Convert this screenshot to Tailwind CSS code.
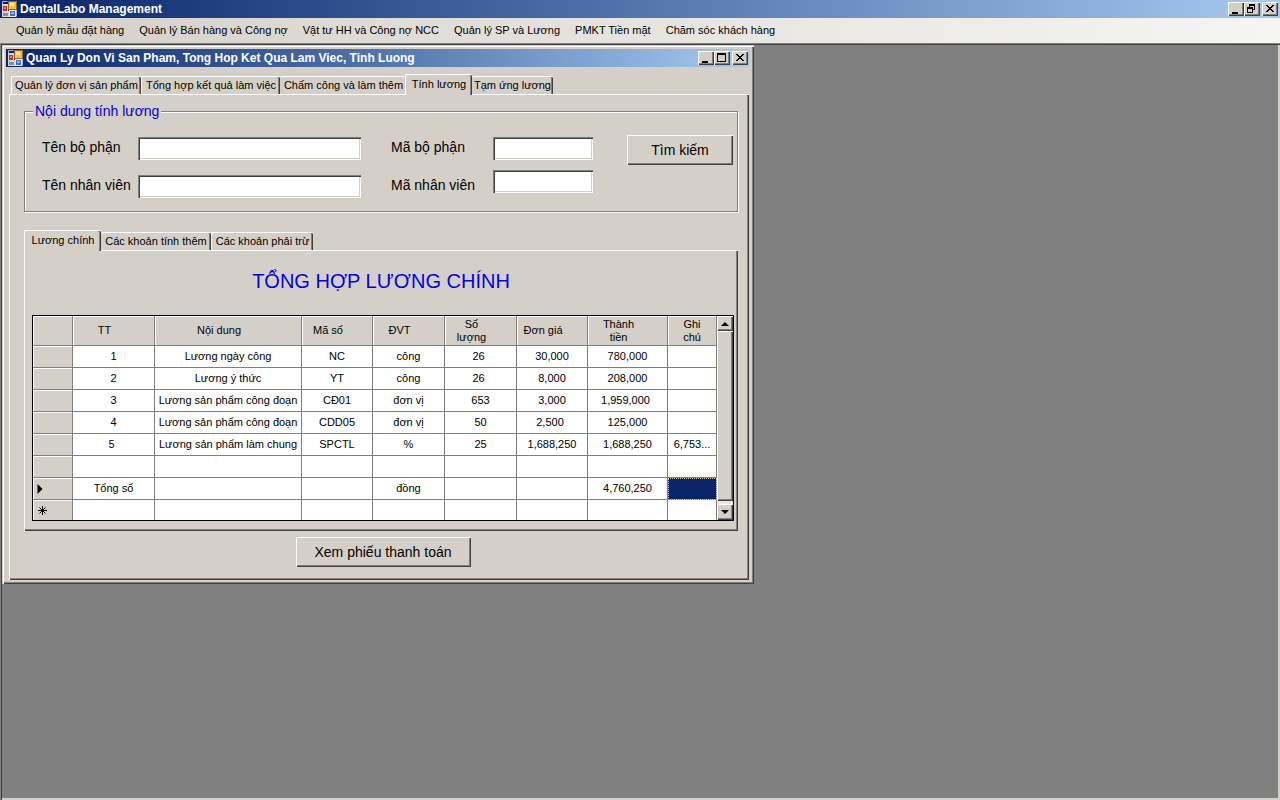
<!DOCTYPE html>
<html lang="vi">
<head>
<meta charset="utf-8">
<title>DentalLabo Management</title>
<script src="https://cdn.jsdelivr.net/npm/@tailwindcss/browser@4"></script>
</head>
<body class="flex min-h-screen flex-col bg-[#d4d0c8] font-['Liberation_Sans',Arial,sans-serif] text-[11px] leading-[13px] text-black">

<svg class="hidden">
  <symbol id="app" viewBox="0 0 16 16">
    <rect x="0" y="3" width="6" height="9" fill="#d9d4cc"/>
    <rect x="1" y="5" width="4" height="5" fill="#c8321e"/><rect x="2" y="6" width="2" height="2" fill="#f08070"/>
    <rect x="6" y="0" width="9" height="9" fill="#8a6a30"/>
    <rect x="7" y="1" width="7" height="7" fill="#f4c23c"/><rect x="8" y="2" width="4" height="3" fill="#ffe78c"/>
    <rect x="0" y="10" width="7" height="6" fill="#d9d4cc"/><rect x="1" y="12" width="5" height="3" fill="#7d8fb8"/>
    <rect x="7" y="9" width="7" height="7" fill="#e8ecf6"/>
    <rect x="8" y="10" width="5" height="5" fill="#3f6fd0"/><rect x="9" y="11" width="3" height="2" fill="#8db4f4"/>
    <path d="M0.500 3V0.500H5.500M14.500 9V15.500" fill="none" stroke="#a9b6d4"/>
  </symbol>
  <symbol id="min" viewBox="0 0 16 14"><path d="M4 10h6v2H4z"/></symbol>
  <symbol id="max" viewBox="0 0 16 14"><path d="M3 2h9v9H3zM4 4v6h7V4z" fill-rule="evenodd"/></symbol>
  <symbol id="restore" viewBox="0 0 16 14"><path d="M5 2h6v6H9V7h1V4H6v1H5zM3 5h6v6H3zM4 7v3h4V7z" fill-rule="evenodd"/></symbol>
  <symbol id="close" viewBox="0 0 16 14"><path d="M4 3h2v1h1v1h2V4h1V3h2v1h-1v1h-1v1H9v1h1v1h1v1h1v1h-2V9H9V8H7v1H6v1H4V9h1V8h1V7h1V6H6V5H5V4H4z"/></symbol>
</svg>

<header class="flex h-[18px] items-center bg-linear-to-r from-[#0a246a] to-[#a6caf0] px-[2px]">
  <svg class="size-4 shrink-0"><use href="#app"/></svg>
  <h1 class="ml-[2px] flex-1 text-[12px] font-bold text-white">DentalLabo Management</h1>
  <button aria-label="Thu nhỏ" class="h-[14px] w-4 bg-[#d4d0c8] shadow-[inset_1px_1px_#fff,inset_-1px_-1px_#404040,inset_-2px_-2px_#808080]"><svg class="h-[14px] w-4"><use href="#min"/></svg></button>
  <button aria-label="Khôi phục" class="h-[14px] w-4 bg-[#d4d0c8] shadow-[inset_1px_1px_#fff,inset_-1px_-1px_#404040,inset_-2px_-2px_#808080]"><svg class="h-[14px] w-4"><use href="#restore"/></svg></button>
  <button aria-label="Đóng" class="ml-[2px] h-[14px] w-4 bg-[#d4d0c8] shadow-[inset_1px_1px_#fff,inset_-1px_-1px_#404040,inset_-2px_-2px_#808080]"><svg class="h-[14px] w-4"><use href="#close"/></svg></button>
</header>

<nav class="flex h-[25px] items-center gap-[15px] bg-linear-to-r from-[#d4d0c8] via-[#e6e4df] to-[#f5f5f3] px-4">
  <button>Quản lý mẫu đặt hàng</button>
  <button>Quản lý Bán hàng và Công nợ</button>
  <button>Vật tư HH và Công nợ NCC</button>
  <button>Quản lý SP và Lương</button>
  <button>PMKT Tiền mặt</button>
  <button>Chăm sóc khách hàng</button>
</nav>

<main class="relative flex-1 bg-[#808080] shadow-[inset_1px_1px_#808080,inset_2px_2px_#404040,inset_-2px_-2px_#d4d0c8]">
  <section aria-label="Tính lương" class="absolute top-[2px] left-[2px] w-[752px] bg-[#d4d0c8] px-1 pt-1 pb-1 shadow-[inset_1px_1px_#d4d0c8,inset_2px_2px_#fff,inset_-1px_-1px_#404040,inset_-2px_-2px_#808080]">
    <div class="flex h-[18px] items-center bg-linear-to-r from-[#0a246a] to-[#a6caf0] px-[2px]">
      <svg class="size-4 shrink-0"><use href="#app"/></svg>
      <h2 class="ml-[2px] flex-1 text-[12px] font-bold text-white">Quan Ly Don Vi San Pham, Tong Hop Ket Qua Lam Viec, Tinh Luong</h2>
      <button aria-label="Thu nhỏ" class="h-[14px] w-4 bg-[#d4d0c8] shadow-[inset_1px_1px_#fff,inset_-1px_-1px_#404040,inset_-2px_-2px_#808080]"><svg class="h-[14px] w-4"><use href="#min"/></svg></button>
      <button aria-label="Phóng to" class="h-[14px] w-4 bg-[#d4d0c8] shadow-[inset_1px_1px_#fff,inset_-1px_-1px_#404040,inset_-2px_-2px_#808080]"><svg class="h-[14px] w-4"><use href="#max"/></svg></button>
      <button aria-label="Đóng" class="ml-[2px] h-[14px] w-4 bg-[#d4d0c8] shadow-[inset_1px_1px_#fff,inset_-1px_-1px_#404040,inset_-2px_-2px_#808080]"><svg class="h-[14px] w-4"><use href="#close"/></svg></button>
    </div>

    <div class="mt-[7px] pr-px pl-[3px]">
      <div role="tablist" class="flex items-end pl-[2px] whitespace-nowrap">
        <button role="tab" class="h-[18px] w-[130px] rounded-t-[2px] border-t border-l border-white shadow-[inset_-1px_0_#404040,inset_-2px_0_#808080]">Quản lý đơn vị sản phẩm</button>
        <button role="tab" class="h-[18px] w-[139px] rounded-t-[2px] border-t border-l border-white shadow-[inset_-1px_0_#404040,inset_-2px_0_#808080]">Tổng hợp kết quả làm việc</button>
        <button role="tab" class="h-[18px] w-[125px] rounded-t-[2px] border-t border-white pl-[2px]">Chấm công và làm thêm</button>
        <button role="tab" aria-selected="true" class="z-10 -mb-px h-[21px] w-[67px] rounded-t-[2px] border-t border-l border-white bg-[#d4d0c8] pb-[2px] shadow-[inset_-1px_0_#404040,inset_-2px_0_#808080]">Tính lương</button>
        <button role="tab" class="h-[18px] w-[81px] rounded-t-[2px] border-t border-white shadow-[inset_-1px_0_#404040,inset_-2px_0_#808080]">Tạm ứng lương</button>
      </div>

      <div role="tabpanel" class="pt-[10px] pr-[11px] pb-[13px] pl-[15px] shadow-[inset_1px_1px_#fff,inset_-1px_-1px_#404040,inset_-2px_-2px_#808080]">
        <fieldset class="flex items-start border border-[#808080] px-[4px] pb-[13px] shadow-[inset_1px_1px_#fff,1px_1px_#fff]">
          <legend class="ml-[4px] bg-[#d4d0c8] px-[2px] text-[14px] leading-[15px] text-[#0000d8]">Nội dung tính lương</legend>
          <div class="mt-[18px] ml-[13px] grid grid-cols-[96px_223px] items-center gap-y-[15px] text-[14px] leading-[16px]">
            <label for="ten-bp" class="pb-[4px]">Tên bộ phận</label>
            <input id="ten-bp" class="h-[23px] w-full bg-white px-1 text-[13px] shadow-[inset_1px_1px_#808080,inset_2px_2px_#404040,inset_-1px_-1px_#fff,inset_-2px_-2px_#d4d0c8]">
            <label for="ten-nv" class="pb-[4px]">Tên nhân viên</label>
            <input id="ten-nv" class="h-[23px] w-full bg-white px-1 text-[13px] shadow-[inset_1px_1px_#808080,inset_2px_2px_#404040,inset_-1px_-1px_#fff,inset_-2px_-2px_#d4d0c8]">
          </div>
          <div class="mt-[18px] ml-[30px] flex w-[102px] flex-col gap-[22px] pt-[2px] text-[14px] leading-[16px]">
            <label for="ma-bp">Mã bộ phận</label>
            <label for="ma-nv">Mã nhân viên</label>
          </div>
          <div class="mt-[18px] flex w-[100px] flex-col gap-[10px]">
            <input id="ma-bp" class="h-[23px] w-full bg-white px-1 text-[13px] shadow-[inset_1px_1px_#808080,inset_2px_2px_#404040,inset_-1px_-1px_#fff,inset_-2px_-2px_#d4d0c8]">
            <input id="ma-nv" class="h-[23px] w-full bg-white px-1 text-[13px] shadow-[inset_1px_1px_#808080,inset_2px_2px_#404040,inset_-1px_-1px_#fff,inset_-2px_-2px_#d4d0c8]">
          </div>
          <button class="mt-4 ml-auto h-[30px] w-[106px] text-[14px] leading-[16px] shadow-[inset_1px_1px_#fff,inset_-1px_-1px_#404040,inset_-2px_-2px_#808080]">Tìm kiếm</button>
        </fieldset>

        <div role="tablist" class="mt-[18px] flex items-end whitespace-nowrap">
          <button role="tab" aria-selected="true" class="z-10 -mb-px h-[21px] w-[77px] rounded-t-[2px] border-t border-l border-white bg-[#d4d0c8] pb-[2px] shadow-[inset_-1px_0_#404040,inset_-2px_0_#808080]">Lương chính</button>
          <button role="tab" class="h-[18px] w-[110px] rounded-t-[2px] border-t border-white shadow-[inset_-1px_0_#404040,inset_-2px_0_#808080]">Các khoản tính thêm</button>
          <button role="tab" class="h-[18px] w-[102px] rounded-t-[2px] border-t border-l border-white shadow-[inset_-1px_0_#404040,inset_-2px_0_#808080]">Các khoản phải trừ</button>
        </div>

        <div role="tabpanel" class="pt-[18px] pr-[3px] pb-[9px] pl-[7px] shadow-[inset_1px_1px_#fff,inset_-1px_-1px_#404040,inset_-2px_-2px_#808080]">
          <h3 class="pr-1 text-center text-[20px] leading-[26px] text-[#0000ee]">TỔNG HỢP LƯƠNG CHÍNH</h3>
          <div class="mx-px mt-[21px] mb-px flex border border-black bg-[#d4d0c8]">
            <table class="flex-1 table-fixed border-separate border-spacing-0 bg-white text-center [&_td]:h-[22px] [&_td]:border-r [&_td]:border-b [&_td]:border-[#808080] [&_th]:border-r [&_th]:border-b [&_th]:border-[#808080] [&_th]:bg-[#d4d0c8] [&_th]:font-normal [&_th]:shadow-[inset_1px_1px_#fff] [&_thead_th]:h-[30px] [&_thead_th]:pr-[18px] [&_tr:last-child_td]:h-5 [&_tr:last-child_td]:border-b-0 [&_tbody_tr:last-child_th]:border-b-0">
              <colgroup><col class="w-[40px]"><col class="w-[82px]"><col class="w-[147px]"><col class="w-[71px]"><col class="w-[72px]"><col class="w-[72px]"><col class="w-[71px]"><col class="w-[80px]"><col class="w-[49px]"></colgroup>
              <thead>
                <tr><th></th><th>TT</th><th>Nội dung</th><th>Mã số</th><th>ĐVT</th><th>Số<br>lượng</th><th>Đơn giá</th><th>Thành<br>tiền</th><th><span class="-mr-[18px] block">Ghi<br>chú</span></th></tr>
              </thead>
              <tbody>
                <tr><th></th><td>1</td><td>Lương ngày công</td><td>NC</td><td>công</td><td class="pr-1">26</td><td>30,000</td><td>780,000</td><td></td></tr>
                <tr><th></th><td>2</td><td>Lương ý thức</td><td>YT</td><td>công</td><td class="pr-1">26</td><td>8,000</td><td>208,000</td><td></td></tr>
                <tr><th></th><td>3</td><td>Lương sản phẩm công đoạn</td><td>CĐ01</td><td>đơn vị</td><td>653</td><td>3,000</td><td class="pr-1">1,959,000</td><td></td></tr>
                <tr><th></th><td>4</td><td>Lương sản phẩm công đoạn</td><td>CDD05</td><td>đơn vị</td><td>50</td><td class="pr-1">2,500</td><td>125,000</td><td></td></tr>
                <tr><th></th><td class="pr-1">5</td><td>Lương sản phẩm làm chung</td><td>SPCTL</td><td>%</td><td>25</td><td>1,688,250</td><td>1,688,250</td><td>6,753...</td></tr>
                <tr><th></th><td></td><td></td><td></td><td></td><td></td><td></td><td></td><td></td></tr>
                <tr><th><svg class="ml-[4px] block h-[10px] w-[6px]" viewBox="0 0 6 10"><path d="M0.500 0L5.500 5L0.500 10z"/></svg></th><td>Tổng số</td><td></td><td></td><td>đồng</td><td></td><td></td><td>4,760,250</td><td class="bg-[#0a246a] outline-1 -outline-offset-1 outline-dotted outline-[#d0c8a0]"></td></tr>
                <tr><th><svg class="ml-[5px] block size-[9px]" viewBox="0 0 9 9"><path d="M4.500 0v9M0 4.500h9M1.500 1.500l6 6M7.500 1.500l-6 6" stroke="#000"/></svg></th><td></td><td></td><td></td><td></td><td></td><td></td><td></td><td></td></tr>
              </tbody>
            </table>
            <div class="flex w-4 flex-col bg-[#ece9e4]">
              <button aria-label="Cuộn lên" class="flex h-[15px] w-4 items-center justify-center bg-[#d4d0c8] shadow-[inset_1px_1px_#fff,inset_-1px_-1px_#404040,inset_-2px_-2px_#808080]"><svg class="h-[4px] w-[8px]" viewBox="0 0 8 4"><path d="M0 4L4 0L8 4z"/></svg></button>
              <div class="mb-[3px] flex-1 bg-[#d4d0c8] shadow-[inset_1px_1px_#fff,inset_-1px_-1px_#404040,inset_-2px_-2px_#808080]"></div>
              <button aria-label="Cuộn xuống" class="flex h-4 w-4 items-center justify-center bg-[#d4d0c8] shadow-[inset_1px_1px_#fff,inset_-1px_-1px_#404040,inset_-2px_-2px_#808080]"><svg class="h-[4px] w-[8px]" viewBox="0 0 8 4"><path d="M0 0h8L4 4z"/></svg></button>
            </div>
          </div>
        </div>
        <div class="mt-[6px] flex justify-center pl-[4px]">
          <button class="h-[30px] w-[175px] text-[14px] leading-[16px] shadow-[inset_1px_1px_#fff,inset_-1px_-1px_#404040,inset_-2px_-2px_#808080]">Xem phiếu thanh toán</button>
        </div>
      </div>
    </div>
  </section>
</main>
</body>
</html>
